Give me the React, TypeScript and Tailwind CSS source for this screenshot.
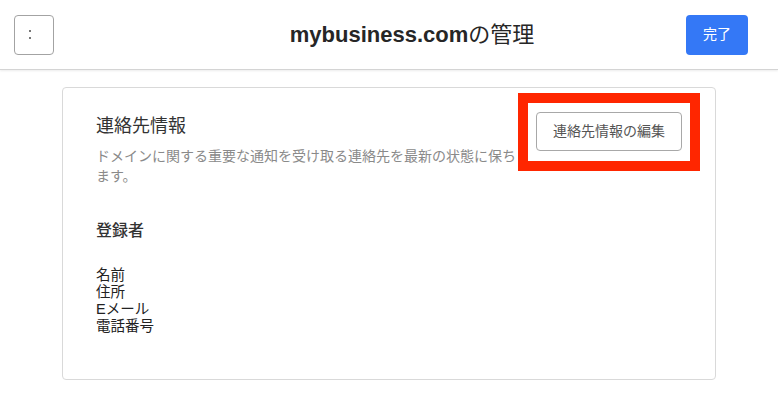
import React from 'react';

const font = { fontFamily: '"Liberation Sans", "Noto Sans CJK JP", sans-serif' };

const registrantFields = ['名前', '住所', 'Eメール', '電話番号'];

export default function App() {
  return (
    <div className="min-h-screen w-full bg-white text-[#222]" style={font}>
      {/* top bar */}
      <header className="flex h-[70px] items-center border-b border-[#d4d4d4] bg-white pl-[14px] pr-[30px] shadow-[0_1px_2px_rgba(0,0,0,0.08)]">
        <button className="flex h-[40px] w-[40px] shrink-0 items-start rounded-[4px] border border-[#a3a3a3] bg-white pl-[14px] pt-[14px]">
          <span className="flex flex-col gap-[5px]">
            <span className="block h-[2px] w-[2px] bg-[#777]" />
            <span className="block h-[2px] w-[2px] bg-[#777]" />
          </span>
        </button>
        <div className="flex flex-1 justify-center pl-[84px]">
          <h1 className="text-[22px] leading-[28px] text-[#262626]">
            <span className="font-bold">mybusiness.com</span>
            <span className="font-normal">の管理</span>
          </h1>
        </div>
        <button className="h-[40px] w-[62px] shrink-0 rounded-[4px] bg-[#3478f6] text-[14px] text-white">
          完了
        </button>
      </header>

      {/* contact card */}
      <section className="mx-auto mt-[17px] h-[293px] w-[654px] rounded-[4px] border border-[#d9d9d9] px-[33px] pt-[24px]">
        <div className="flex items-start justify-between">
          <div className="w-[425px]">
            <h2 className="text-[18px] leading-[28px] text-[#333]">連絡先情報</h2>
            <p className="mt-[6px] text-[14px] leading-[20px] text-[#8a8a8a]">
              ドメインに関する重要な通知を受け取る連絡先を最新の状態に保ちます。
            </p>
          </div>
          <div className="-mr-[18px] -mt-[19px] border-[10px] border-[#ff2600] bg-white px-[8px] pb-[10px] pt-[9px]">
            <button className="h-[39px] w-[146px] rounded-[4px] border border-[#a8a8a8] bg-white text-[14px] text-[#555]">
              連絡先情報の編集
            </button>
          </div>
        </div>

        <h3 className="mt-[34px] text-[16px] font-medium leading-[22px] text-[#333]">登録者</h3>
        <ul className="mt-[25px]">
          {registrantFields.map((f) => (
            <li key={f} className="text-[14.5px] leading-[17px] text-[#222]">
              {f}
            </li>
          ))}
        </ul>
      </section>
    </div>
  );
}
